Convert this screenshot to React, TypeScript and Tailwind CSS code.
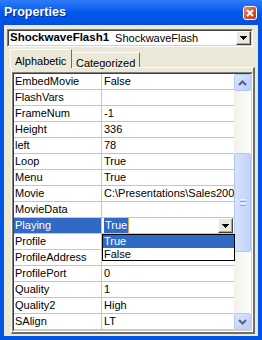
const rows: [string, string][] = [
  ['EmbedMovie', 'False'],
  ['FlashVars', ''],
  ['FrameNum', '-1'],
  ['Height', '336'],
  ['left', '78'],
  ['Loop', 'True'],
  ['Menu', 'True'],
  ['Movie', 'C:\\Presentations\\Sales2006.swf'],
  ['MovieData', ''],
  ['Playing', 'True'],
  ['Profile', ''],
  ['ProfileAddress', ''],
  ['ProfilePort', '0'],
  ['Quality', '1'],
  ['Quality2', 'High'],
  ['SAlign', 'LT'],
];

// small black triangle used by the classic dropdown buttons
function DownTriangle() {
  return (
    <svg width="7" height="4" viewBox="0 0 7 4" shapeRendering="crispEdges">
      <rect x="0" y="0" width="7" height="1" fill="#000" />
      <rect x="1" y="1" width="5" height="1" fill="#000" />
      <rect x="2" y="2" width="3" height="1" fill="#000" />
      <rect x="3" y="3" width="1" height="1" fill="#000" />
    </svg>
  );
}

function ClassicButton({ className }: { className: string }) {
  return (
    <div
      className={`flex items-center justify-center bg-[#ECE9D8] border border-t-white border-l-white border-r-[#404040] border-b-[#404040] shadow-[inset_-1px_-1px_0_#ACA899] ${className}`}
    >
      <DownTriangle />
    </div>
  );
}

function ScrollButton({ up }: { up?: boolean }) {
  return (
    <div className="h-[17px] shrink-0 flex items-center justify-center rounded-[2px] border border-[#B4C8F6] bg-gradient-to-br from-[#DCE6FD] to-[#BACDF8]">
      <svg width="9" height="6" viewBox="0 0 9 6">
        <path
          d={up ? 'M1 5L4.5 1.5L8 5' : 'M1 1L4.5 4.5L8 1'}
          fill="none"
          stroke="#4D6185"
          strokeWidth="2"
        />
      </svg>
    </div>
  );
}

export default function App() {
  return (
    <div className="w-[262px] h-[340px] flex flex-col bg-[#0055E5] font-['Liberation_Sans',Arial,sans-serif] text-[11px] text-black overflow-hidden">
      {/* Title bar */}
      <div className="h-[25px] flex items-center justify-between pl-[4px] pr-[5px] bg-gradient-to-b from-[#2F7CF8] via-[#0058EE] to-[#0052DE]">
        <span className="text-white font-bold text-[12.5px] leading-none [text-shadow:1px_1px_0_#0A2A8A]">
          Properties
        </span>
        <div className="w-[14px] h-[14px] rounded-[3px] border border-white bg-gradient-to-br from-[#EE8A6A] via-[#DA532C] to-[#C23A12] flex items-center justify-center">
          <svg width="8" height="8" viewBox="0 0 8 8">
            <path d="M1 1L7 7M7 1L1 7" stroke="#fff" strokeWidth="2" />
          </svg>
        </div>
      </div>

      {/* Client area */}
      <div className="flex-1 mx-[4px] mb-[4px] bg-[#ECE9D8] flex flex-col">
        {/* Object combo */}
        <div className="mt-[4px] ml-[3px] w-[246px] h-[18px] border border-t-[#808080] border-l-[#808080] border-r-white border-b-white">
          <div className="h-full flex items-center bg-white border border-t-[#404040] border-l-[#404040] border-r-[#D4D0C8] border-b-[#D4D0C8]">
            <span className="pl-[1px] font-bold text-[11.5px] whitespace-nowrap">ShockwaveFlash1</span>
            <span className="ml-[6px] whitespace-nowrap flex-1">ShockwaveFlash</span>
            <ClassicButton className="w-[15px] h-full" />
          </div>
        </div>

        {/* Tabs */}
        <div className="mt-[2px] ml-[6px] h-[18px] flex items-start">
          <div className="relative z-10 w-[62px] h-[19px] bg-[#ECE9D8] border-t border-l border-t-white border-l-white border-r border-r-[#716F64] rounded-tl-[2px] pl-[4px] pt-[3px]">
            Alphabetic
          </div>
          <div className="mt-[3px] w-[68px] h-[15px] border-t border-t-white border-r border-r-[#716F64] pl-[4px] pt-[2px]">
            Categorized
          </div>
        </div>

        {/* Tab panel */}
        <div className="ml-[7px] mr-[3px] pt-[4px] border-t border-l border-t-white border-l-white border-r-2 border-b-2 border-r-[#716F64] border-b-[#716F64]">
          {/* Property grid */}
          <div className="w-[241px] border border-t-[#808080] border-l-[#808080] border-r-white border-b-white">
            <div className="flex border border-t-[#404040] border-l-[#404040] border-r-[#D4D0C8] border-b-[#D4D0C8]">
              <div className="w-[220px] shrink-0 bg-white">
                {rows.map(([name, value]) => {
                  const active = name === 'Playing';
                  return (
                    <div key={name} className="relative h-[16px] flex border-b border-[#C4C4C4]">
                      <div
                        className={`w-[88px] shrink-0 border-r border-[#C4C4C4] pl-[1px] leading-[15px] whitespace-nowrap overflow-hidden ${
                          active ? 'bg-[#316AC5] text-white' : ''
                        }`}
                      >
                        {name}
                      </div>
                      <div className="w-[132px] flex items-center pl-[2px] leading-[15px] whitespace-nowrap overflow-hidden">
                        {active ? (
                          <>
                            <span className="bg-[#316AC5] text-white px-[1px] border-r border-[#E0A060]">{value}</span>
                            <span className="flex-1" />
                            <ClassicButton className="w-[15px] h-[15px] mr-[1px] shrink-0" />
                          </>
                        ) : (
                          value
                        )}
                      </div>
                      {active && (
                        <div className="absolute left-[88px] top-[16px] z-20 w-[133px] border border-black bg-white text-black">
                          <div className="h-[13px] leading-[13px] pl-[1px] bg-[#316AC5] text-white">True</div>
                          <div className="h-[12px] leading-[12px] pl-[1px]">False</div>
                        </div>
                      )}
                    </div>
                  );
                })}
              </div>

              {/* Scrollbar */}
              <div className="w-[17px] shrink-0 flex flex-col bg-gradient-to-r from-[#F2F1EA] to-[#FDFDFA]">
                <ScrollButton up />
                <div className="h-[62px] shrink-0" />
                <div className="h-[99px] shrink-0 rounded-[2px] border border-[#B1C6F5] bg-gradient-to-r from-[#D6E2FD] to-[#C2D3FA] flex flex-col items-center justify-center gap-[1px]">
                  <div className="w-[6px] h-[1px] bg-[#EEF3FE]" />
                  <div className="w-[6px] h-[1px] bg-[#8CA8E8]" />
                  <div className="w-[6px] h-[1px] bg-[#EEF3FE]" />
                  <div className="w-[6px] h-[1px] bg-[#8CA8E8]" />
                </div>
                <div className="flex-1" />
                <ScrollButton />
              </div>
            </div>
          </div>
        </div>
      </div>
    </div>
  );
}
